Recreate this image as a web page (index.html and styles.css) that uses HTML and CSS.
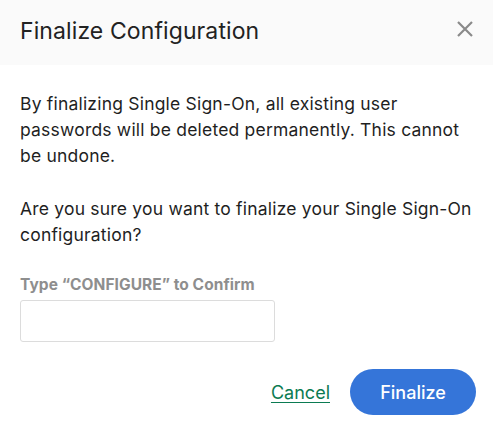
FILE: index.html
```
<!DOCTYPE html>
<html>
<head>
<meta charset="utf-8">
<link rel="stylesheet" href="styles.css">
</head>
<body>
<div class="dialog">
  <div class="header">
    <h1 class="title">Finalize Configuration</h1>
    <button class="close" aria-label="Close">
      <svg width="16" height="16" viewBox="0 0 16 16"><path d="M1 1 L15 15 M15 1 L1 15" stroke="#8a8a8a" stroke-width="2.2" fill="none"/></svg>
    </button>
  </div>
  <div class="body">
    <p class="text">By finalizing Single Sign-On, all existing user passwords will be deleted permanently. This cannot be undone.</p>
    <p class="text">Are you sure you want to finalize your Single Sign-On configuration?</p>
    <label class="label">Type “CONFIGURE” to Confirm</label>
    <input class="input" type="text">
    <div class="actions">
      <a class="cancel" href="#">Cancel</a>
      <button class="primary">Finalize</button>
    </div>
  </div>
</div>
</body>
</html>
```
FILE: styles.css
```
* { box-sizing: border-box; }
html, body { margin: 0; padding: 0; background: #fff; }
body { font-family: Inter, "Liberation Sans", sans-serif; color: #1e1e1e; width: 493px; height: 425px; overflow: hidden; }
.dialog { display: flex; flex-direction: column; }
.header { height: 65px; background: #fafafa; display: flex; align-items: flex-start; justify-content: space-between; padding: 17px 20px 0 20px; }
.title { margin: 0; font-size: 23px; letter-spacing: 0.1px; line-height: 28px; font-weight: 400; color: #222; }
.close { border: 0; background: none; padding: 0; width: 16px; height: 16px; display: flex; margin-top: 4px; }
.body { padding: 26px 20px 0 20px; display: flex; flex-direction: column; }
.text { margin: 0 0 27px 0; font-size: 17.5px; letter-spacing: 0.2px; line-height: 26px; color: #1f1f1f; }
.label { font-size: 15.5px; letter-spacing: 0.05px; font-weight: 700; color: #8e8e8e; line-height: 20px; }
.input { margin-top: 5px; width: 255px; height: 42px; border: 1px solid #dcdcdc; border-radius: 3px; }
.actions { display: flex; justify-content: flex-end; align-items: center; gap: 20px; margin-top: 27px; margin-right: -3px; }
.cancel { color: #0b7b52; font-size: 18px; text-decoration: underline; text-underline-offset: 3px; }
.primary { width: 126px; height: 46px; border: 0; border-radius: 23px; background: #3575d9; color: #fff; font-family: inherit; font-size: 18px; font-weight: 500; }
```
